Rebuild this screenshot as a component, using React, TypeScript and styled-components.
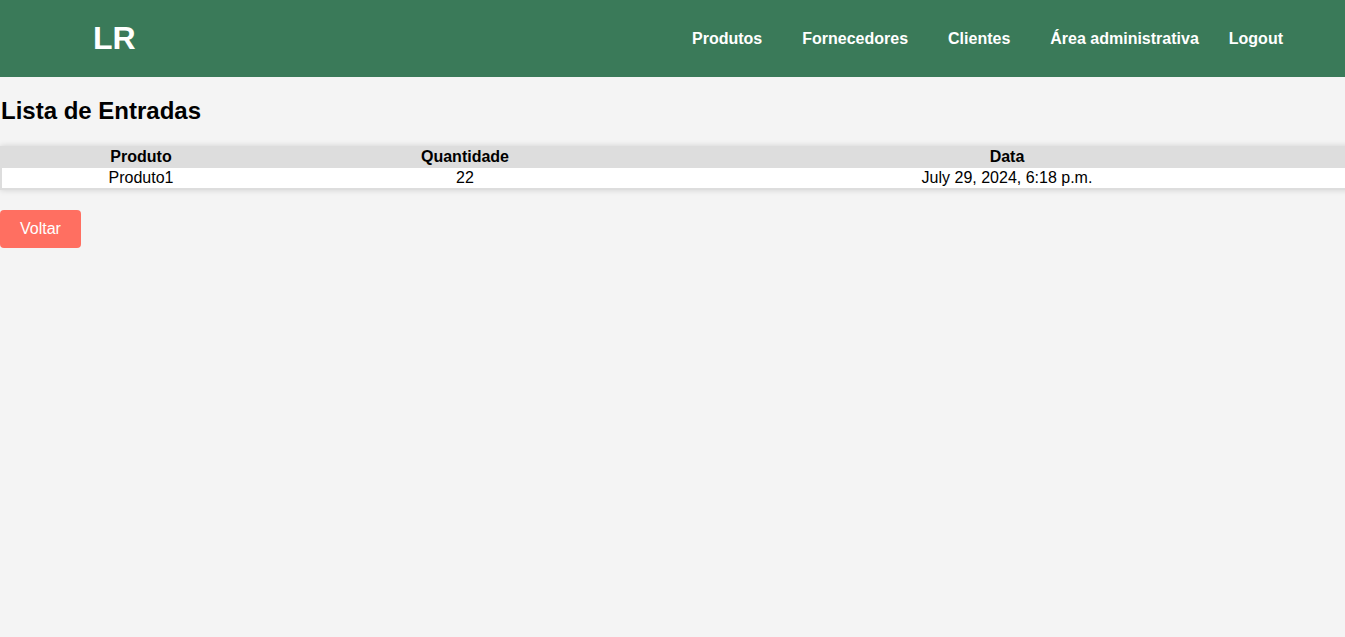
import styled, { createGlobalStyle } from "styled-components";

const GlobalStyle = createGlobalStyle`
  body {
    margin: 0;
    background-color: #f4f4f4;
    font-family: "Liberation Sans", Arial, sans-serif;
    color: #000;
    overflow-x: hidden;
  }
`;

const Header = styled.header`
  height: 77px;
  background-color: #3a7a59;
  display: flex;
  align-items: center;
  justify-content: space-between;
  padding: 0 62px 0 93px;
`;

const Logo = styled.div`
  color: #ffffff;
  font-size: 32px;
  font-weight: 700;
`;

const Nav = styled.nav`
  display: flex;
  align-items: center;
`;

const NavLink = styled.a<{ $gap?: number }>`
  color: #ffffff;
  font-size: 16px;
  font-weight: 700;
  text-decoration: none;
  margin-left: ${(p) => p.$gap ?? 40}px;
  cursor: pointer;
`;

const Main = styled.main`
  overflow: hidden;
  padding-bottom: 8px;
`;

const Title = styled.h2`
  font-size: 24px;
  font-weight: 700;
  margin: 20px 0 21px 1px;
`;

const Table = styled.table`
  width: calc(100% + 19px);
  border-collapse: collapse;
  border-left: 2px solid #dddddd;
  border-bottom: 2px solid #dddddd;
  box-shadow: 0 0 6px rgba(0, 0, 0, 0.15);
  font-size: 16px;
`;

const Th = styled.th<{ $w?: number }>`
  background-color: #dddddd;
  font-weight: 700;
  height: 22px;
  padding: 0;
  width: ${(p) => (p.$w ? `${p.$w}px` : "auto")};
`;

const Td = styled.td`
  background-color: #ffffff;
  text-align: center;
  height: 20px;
  padding: 0;
`;

const Button = styled.button`
  margin-top: 20px;
  background-color: #ff6f61;
  color: #ffffff;
  border: none;
  border-radius: 4px;
  padding: 0 20px;
  height: 38px;
  font-family: "Liberation Sans", Arial, sans-serif;
  font-size: 16px;
  cursor: pointer;
`;

export default function App() {
  const rows = [{ produto: "Produto1", quantidade: 22, data: "July 29, 2024, 6:18 p.m." }];
  return (
    <>
      <GlobalStyle />
      <Header>
        <Logo>LR</Logo>
        <Nav>
          <NavLink $gap={0}>Produtos</NavLink>
          <NavLink>Fornecedores</NavLink>
          <NavLink>Clientes</NavLink>
          <NavLink>Área administrativa</NavLink>
          <NavLink $gap={30}>Logout</NavLink>
        </Nav>
      </Header>
      <Main>
        <Title>Lista de Entradas</Title>
        <Table>
          <thead>
            <tr>
              <Th $w={278}>Produto</Th>
              <Th $w={370}>Quantidade</Th>
              <Th>Data</Th>
            </tr>
          </thead>
          <tbody>
            {rows.map((r) => (
              <tr key={r.produto}>
                <Td>{r.produto}</Td>
                <Td>{r.quantidade}</Td>
                <Td>{r.data}</Td>
              </tr>
            ))}
          </tbody>
        </Table>
        <Button>Voltar</Button>
      </Main>
    </>
  );
}
